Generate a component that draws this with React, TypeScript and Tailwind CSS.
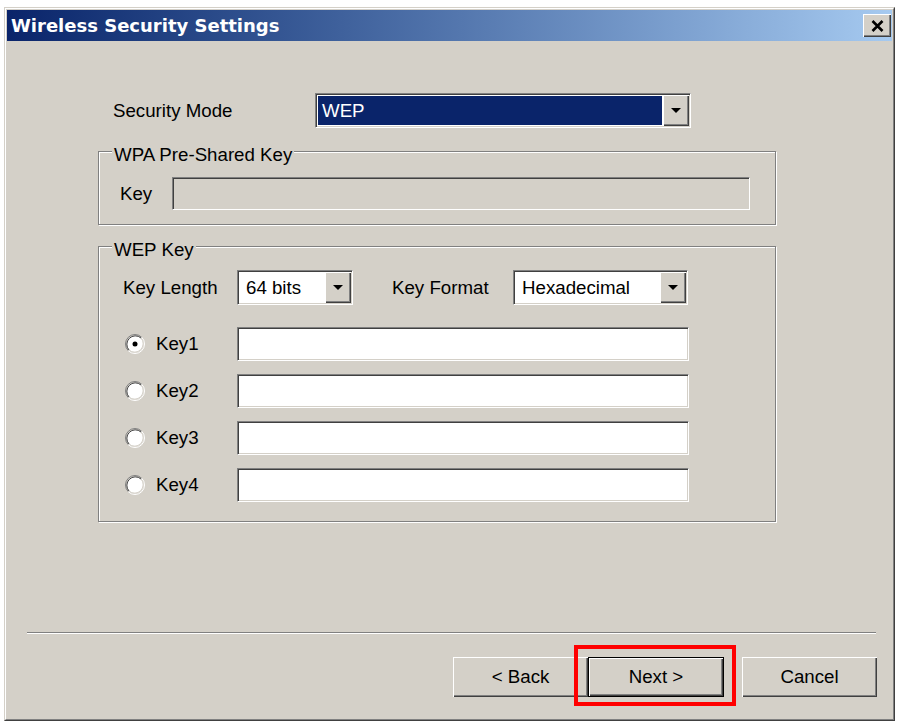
import type { ReactNode } from "react";

// classic Win2000 bevels, built from borders + inset shadows
const SUNKEN =
  "border border-t-[#808080] border-l-[#808080] border-b-white border-r-white shadow-[inset_1px_1px_0_#404040,inset_-1px_-1px_0_#d4d0c8]";
const RAISED = "shadow-[inset_1px_1px_0_#fff,inset_-1px_-1px_0_#404040,inset_-2px_-2px_0_#808080]";
const ETCHED = "border border-[#808080] shadow-[inset_1px_1px_0_#fff,1px_1px_0_#fff]";
const TXT = "font-['Liberation_Sans',Arial,sans-serif] text-[18.7px] leading-[22px] text-black";

function ArrowButton() {
  return (
    <div className={`flex h-full w-[26px] shrink-0 items-center justify-center bg-[#d4d0c8] ${RAISED}`}>
      <svg width="10" height="5" viewBox="0 0 10 5">
        <polygon points="0,0 10,0 5,5" fill="#000" />
      </svg>
    </div>
  );
}

function Combo({ value, className, selected }: { value: string; className: string; selected?: boolean }) {
  return (
    <div className={`flex h-[35px] bg-white p-[1px] ${SUNKEN} ${className}`}>
      <div className="flex min-w-0 flex-1 items-center">
        {selected ? (
          <span className="m-[1px] flex h-[29px] flex-1 items-center bg-[#0a246a] pl-[4px] text-white">{value}</span>
        ) : (
          <span className="pl-[7px]">{value}</span>
        )}
      </div>
      <ArrowButton />
    </div>
  );
}

function Field({ className, disabled }: { className: string; disabled?: boolean }) {
  return <div className={`${SUNKEN} ${disabled ? "bg-[#d4d0c8]" : "bg-white"} ${className}`} />;
}

function Radio({ checked }: { checked?: boolean }) {
  return (
    <svg width="20" height="20" viewBox="0 0 20 20" className="shrink-0">
      <circle cx="10" cy="10" r="8.5" fill="#fff" />
      <path d="M16.72 3.28 A9.5 9.5 0 0 0 3.28 16.72" stroke="#808080" strokeWidth="1" fill="none" />
      <path d="M3.28 16.72 A9.5 9.5 0 0 0 16.72 3.28" stroke="#fff" strokeWidth="1" fill="none" />
      <path d="M16 4 A8.5 8.5 0 0 0 4 16" stroke="#404040" strokeWidth="1" fill="none" />
      <path d="M4 16 A8.5 8.5 0 0 0 16 4" stroke="#d4d0c8" strokeWidth="1" fill="none" />
      {checked && <circle cx="10" cy="10" r="2.5" fill="#000" />}
    </svg>
  );
}

function Group({ title, className, children }: { title: string; className: string; children: ReactNode }) {
  return (
    <div className={`relative ml-[91px] w-[678px] ${ETCHED} ${className}`}>
      <span className="absolute left-[13px] top-[-8px] bg-[#d4d0c8] px-[2px]">{title}</span>
      {children}
    </div>
  );
}

function WinButton({ label, isDefault }: { label: string; isDefault?: boolean }) {
  return (
    <button
      type="button"
      className={`flex h-[40px] items-center justify-center bg-[#d4d0c8] ${RAISED} ${
        isDefault ? "w-[136px] border border-black" : "w-[135px]"
      }`}
    >
      {label}
    </button>
  );
}

export default function App() {
  return (
    <div className={`min-h-[723px] w-[900px] bg-white pl-[4px] pt-[7px] ${TXT}`}>
      <div className="flex h-[714px] w-[891px] flex-col border border-t-[#d4d0c8] border-l-[#d4d0c8] border-b-[#404040] border-r-[#404040] bg-[#d4d0c8]">
        <div className="flex flex-1 flex-col border border-t-white border-l-white border-b-[#808080] border-r-[#808080] p-[1px]">
          {/* title bar */}
          <div className="flex h-[31px] items-center justify-between bg-linear-to-r from-[#0a246a] to-[#a6caf0] pl-[4px] pr-[1px]">
            <span className="font-['DejaVu_Sans',Tahoma,sans-serif] text-[18px] font-bold text-white">
              Wireless Security Settings
            </span>
            <button
              type="button"
              aria-label="Close"
              className={`flex h-[23px] w-[28px] items-center justify-center bg-[#d4d0c8] ${RAISED}`}
            >
              <svg width="13" height="12" viewBox="0 0 13 12">
                <path d="M1.5 1 L11.5 11 M11.5 1 L1.5 11" stroke="#000" strokeWidth="2.6" />
              </svg>
            </button>
          </div>

          {/* body */}
          <div className="flex flex-1 flex-col pt-[52px]">
            <div className="flex items-center pl-[106px]">
              <span className="w-[202px]">Security Mode</span>
              <Combo value="WEP" className="w-[376px]" selected />
            </div>

            <Group title="WPA Pre-Shared Key" className="mt-[23px] h-[74px]">
              <div className="flex items-center pl-[21px] pt-[25px]">
                <span className="w-[52px]">Key</span>
                <Field className="h-[33px] w-[578px]" disabled />
              </div>
            </Group>

            <Group title="WEP Key" className="mt-[21px] h-[276px]">
              <div className="flex flex-col pl-[24px] pt-[23px]">
                <div className="flex h-[35px] items-center">
                  <span className="w-[114px]">Key Length</span>
                  <Combo value="64 bits" className="w-[116px]" />
                  <span className="ml-[39px] w-[121px]">Key Format</span>
                  <Combo value="Hexadecimal" className="w-[175px]" />
                </div>
                <div className="mt-[22px] flex flex-col gap-[13px]">
                  {["Key1", "Key2", "Key3", "Key4"].map((k, i) => (
                    <div key={k} className="flex h-[34px] items-center">
                      <span className="ml-[2px]">
                        <Radio checked={i === 0} />
                      </span>
                      <span className="ml-[11px] w-[81px]">{k}</span>
                      <Field className="h-[34px] w-[452px]" />
                    </div>
                  ))}
                </div>
              </div>
            </Group>

            <div className="ml-[20px] mt-[110px] h-[2px] w-[849px] border-t border-b border-t-[#808080] border-b-white" />

            <div className="mt-[23px] flex pl-[446px]">
              <WinButton label="< Back" />
              <div className="relative">
                <WinButton label="Next >" isDefault />
                <span className="pointer-events-none absolute left-[-14px] top-[-12px] h-[61px] w-[162px] border-4 border-[#f00]" />
              </div>
              <div className="ml-[18px]">
                <WinButton label="Cancel" />
              </div>
            </div>
          </div>
        </div>
      </div>
    </div>
  );
}
